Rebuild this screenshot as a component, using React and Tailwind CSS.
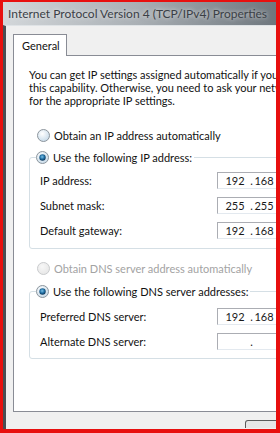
import React from "react";

const font = { fontFamily: 'Lato, "Noto Sans", "Liberation Sans", sans-serif' };

function Radio({ checked, disabled }) {
  const id = `rg${checked ? 1 : 0}${disabled ? 1 : 0}`;
  return (
    <svg width="13" height="13" viewBox="0 0 13 13" className="shrink-0">
      <defs>
        <radialGradient id={id} cx="0.4" cy="0.35" r="0.7">
          <stop offset="0" stopColor={disabled ? "#f7f7f7" : "#ffffff"} />
          <stop offset="1" stopColor={disabled ? "#e6e6e6" : "#c5d9e8"} />
        </radialGradient>
        <radialGradient id="dot" cx="0.45" cy="0.4" r="0.6">
          <stop offset="0" stopColor="#7cc3ea" />
          <stop offset="0.6" stopColor="#1d6a9e" />
          <stop offset="1" stopColor="#0d3558" />
        </radialGradient>
      </defs>
      <circle cx="6.5" cy="6.5" r="6" fill={`url(#${id})`} stroke={disabled ? "#c9cbcd" : "#8d959c"} strokeWidth="1" />
      {checked && <circle cx="6.5" cy="6.5" r="3.2" fill="url(#dot)" />}
    </svg>
  );
}

function IpBox({ a, b, empty }) {
  return (
    <div className="flex h-[17px] w-[70px] shrink-0 items-center border border-[#abadb3] border-r-[#e3e9ef] border-b-[#e3e9ef] bg-white pl-[2px] text-[11px] leading-none text-[#1a1a1a]">
      <span className="w-[30px] text-center">{empty ? "" : a}</span>
      <span className="w-[3px] text-center">.</span>
      <span className="w-[22px] text-center">{empty ? "" : b}</span>
    </div>
  );
}

function Row({ label, a, b, empty }) {
  return (
    <div className="flex h-[17px] items-center justify-between">
      <span className="whitespace-nowrap text-[11px] leading-none text-[#111]">{label}</span>
      <IpBox a={a} b={b} empty={empty} />
    </div>
  );
}

export default function App() {
  return (
    <div
      style={font}
      className="h-[433px] w-[280px] overflow-hidden bg-[#e8100f] pl-[3px] pt-[2px] pr-[4px] pb-[4px]"
    >
      <div className="flex h-full w-full flex-col overflow-hidden bg-[#f0f0f0]">
        {/* title bar */}
        <div className="flex h-[23px] shrink-0 items-center bg-gradient-to-r from-[#d3d7da] via-[#a9afb4] to-[#6f777e] pl-[5px]">
          <span className="whitespace-nowrap text-[12px] leading-none text-[#3b4046] [text-shadow:0_0_4px_rgba(255,255,255,0.8)]">
            Internet Protocol Version 4 (TCP/IPv4) Properties
          </span>
        </div>
        {/* client */}
        <div className="flex min-h-0 flex-1 flex-col border-l-[3px] border-l-[#4a4f54] border-t border-t-[#dfe3e6] bg-[#f0f0f0] pl-[7px] pt-[8px]">
          {/* tab */}
          <div className="flex shrink-0">
            <div className="relative z-10 -mb-px flex h-[22px] w-[54px] items-center border border-b-0 border-[#898c95] bg-white pl-[8px] text-[11px] leading-none text-[#111]">
              General
            </div>
          </div>
          {/* panel */}
          <div className="flex h-[357px] w-[300px] shrink-0 flex-col border border-[#898c95] bg-white pl-[15px] pt-[12px]">
            <p className="w-[400px] whitespace-nowrap text-[11px] leading-[13px] text-[#111]">
              You can get IP settings assigned automatically if your network supports
              <br />
              this capability. Otherwise, you need to ask your network administrator
              <br />
              for the appropriate IP settings.
            </p>
            <div className="mt-[22px] flex items-center gap-[4px] pl-[8px]">
              <Radio />
              <span className="whitespace-nowrap text-[11px] leading-none text-[#111]">Obtain an IP address automatically</span>
            </div>
            {/* group 1 */}
            <div className="relative mt-[15px] flex h-[92px] w-[280px] shrink-0 flex-col rounded-[3px] border border-[#d5dfe5] pl-[10px] pt-[14px]">
              <div className="absolute left-[6px] top-[-7px] flex items-center gap-[4px] bg-white pr-[2px]">
                <Radio checked />
                <span className="whitespace-nowrap text-[11px] leading-none text-[#111]">Use the following IP address:</span>
              </div>
              <div className="flex w-[247px] flex-col gap-[8px]">
                <Row label="IP address:" a="192" b="168" />
                <Row label="Subnet mask:" a="255" b="255" />
                <Row label="Default gateway:" a="192" b="168" />
              </div>
            </div>
            <div className="mt-[13px] flex items-center gap-[4px] pl-[8px]">
              <Radio disabled />
              <span className="whitespace-nowrap text-[11px] leading-none text-[#a3a3a3]">Obtain DNS server address automatically</span>
            </div>
            {/* group 2 */}
            <div className="relative mt-[16px] flex h-[68px] w-[280px] shrink-0 flex-col rounded-[3px] border border-[#d5dfe5] pl-[10px] pt-[16px]">
              <div className="absolute left-[6px] top-[-7px] flex items-center gap-[4px] bg-white pr-[2px]">
                <Radio checked />
                <span className="whitespace-nowrap text-[11px] leading-none text-[#111]">Use the following DNS server addresses:</span>
              </div>
              <div className="flex w-[247px] flex-col gap-[8px]">
                <Row label="Preferred DNS server:" a="192" b="168" />
                <Row label="Alternate DNS server:" empty />
              </div>
            </div>
          </div>
          <div className="flex h-[16px] shrink-0 items-end">
            <div className="ml-[232px] h-[8px] w-[40px] shrink-0 rounded-t-[3px] border border-b-0 border-[#5a5a5a] bg-[#e6e6e6]" />
          </div>
        </div>
      </div>
    </div>
  );
}
